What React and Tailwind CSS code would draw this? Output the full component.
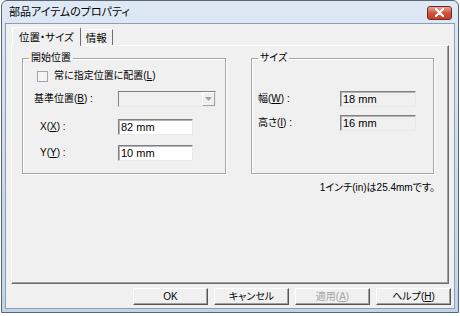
import React from "react";

function Mn({ children }) {
  return <span className="underline underline-offset-1">{children}</span>;
}

function Sunken({ value, readOnly, className = "" }) {
  return (
    <div
      className={`h-[16px] flex items-center border border-t-[#7f7f7f] border-l-[#7f7f7f] border-b-[#e9e9e9] border-r-[#e9e9e9] shadow-[inset_1px_1px_0_#b4b4b4] pl-[2px] text-[11px] leading-none text-black ${
        readOnly ? "bg-[#f0f0f0]" : "bg-white"
      } ${className}`}
    >
      {value}
    </div>
  );
}

function Btn({ children, disabled }) {
  return (
    <div
      className={`w-[75px] h-[17px] flex items-center justify-center border border-t-white border-l-white border-b-[#555] border-r-[#555] shadow-[inset_-1px_-1px_0_#a0a0a0] bg-[#f0f0f0] ${
        disabled ? "text-[#a3a3a3]" : "text-black"
      }`}
    >
      {children}
    </div>
  );
}

export default function App() {
  return (
    <div className="w-[460px] h-[316px] bg-white font-[family-name:'Liberation_Sans','Noto_Sans_CJK_JP',sans-serif] [font-feature-settings:'palt'] text-[10px] leading-[12px] text-black">
      <div className="w-[458px] h-[313px] ml-[1px] flex flex-col rounded-t-[6px] border border-[#5b6675] bg-gradient-to-b from-[#dfe9f5] via-[#cddcee] to-[#c2d4ea]">
        {/* title bar */}
        <div className="h-[22px] flex items-center justify-between pl-[7px] pr-[6px]">
          <span className="text-[11px] leading-[12px] text-black">部品アイテムのプロパティ</span>
          <div className="w-[25px] h-[14px] mt-[1px] rounded-[3px] border border-[#6b2a24] bg-gradient-to-b from-[#e8a493] via-[#d2513c] to-[#c2402b] flex items-center justify-center">
            <svg width="11" height="9" viewBox="0 0 11 9">
              <path d="M2 1 L9 8 M9 1 L2 8" stroke="#fff" strokeWidth="2.2" strokeLinecap="round" />
            </svg>
          </div>
        </div>

        {/* client */}
        <div className="flex-1 mx-[3px] mb-[3px] flex flex-col bg-[#f0f0f0] border border-[#8e9db1]">
          {/* tabs */}
          <div className="flex items-end pl-[6px] pt-[2px] h-[21px]">
            <div className="h-[19px] px-[6px] flex items-center bg-[#f0f0f0] border-t border-l border-white border-r border-r-[#6d6d6d] rounded-t-[2px] relative z-10 -mb-[1px] text-[10.5px]">
              位置・サイズ
            </div>
            <div className="h-[16px] px-[5px] flex items-center border-t border-white border-r border-r-[#6d6d6d] text-[10.5px]">
              情報
            </div>
          </div>

          {/* panel */}
          <div className="mx-[5px] h-[239px] border border-t-white border-l-white border-b-[#6d6d6d] border-r-[#6d6d6d] shadow-[inset_-1px_-1px_0_#a0a0a0] flex flex-col pl-[10px] pr-[13px]">
            <div className="flex gap-[25px] mt-[6px]">
              <fieldset className="w-[204px] h-[122px] border border-[#a7a7a7] shadow-[inset_1px_1px_0_#fff,1px_1px_0_#fff] flex flex-col">
                <legend className="ml-[6px] px-[2px] leading-[12px]">開始位置</legend>
                <div className="flex items-center h-[12px] mt-[6px] pl-[14px]">
                  <div className="w-[11px] h-[11px] border border-[#a6a6a6] bg-[#f4f4f4]" />
                  <span className="ml-[6px]">
                    常に指定位置に配置(<Mn>L</Mn>)
                  </span>
                </div>
                <div className="flex items-center h-[16px] mt-[9px] pl-[11px]">
                  <span className="w-[84px]">
                    基準位置(<Mn>B</Mn>) :
                  </span>
                  <div className="w-[98px] h-[16px] flex justify-end border border-t-[#7f7f7f] border-l-[#7f7f7f] border-b-[#e9e9e9] border-r-[#e9e9e9] bg-[#f0f0f0]">
                    <div className="w-[13px] h-[14px] border-l border-t border-white border-r border-b border-r-[#a0a0a0] border-b-[#a0a0a0] flex items-center justify-center">
                      <svg width="7" height="4" viewBox="0 0 7 4">
                        <path d="M0 0 L7 0 L3.5 4 Z" fill="#a0a0a0" />
                      </svg>
                    </div>
                  </div>
                </div>
                <div className="flex items-center h-[16px] mt-[12px] pl-[17px]">
                  <span className="w-[78px]">
                    X(<Mn>X</Mn>) :
                  </span>
                  <Sunken value="82 mm" className="w-[75px]" />
                </div>
                <div className="flex items-center h-[16px] mt-[10px] pl-[17px]">
                  <span className="w-[78px]">
                    Y(<Mn>Y</Mn>) :
                  </span>
                  <Sunken value="10 mm" className="w-[75px]" />
                </div>
              </fieldset>

              <fieldset className="w-[183px] h-[122px] border border-[#a7a7a7] shadow-[inset_1px_1px_0_#fff,1px_1px_0_#fff] flex flex-col">
                <legend className="ml-[6px] px-[2px] leading-[12px]">サイズ</legend>
                <div className="flex items-center h-[16px] mt-[27px] pl-[6px]">
                  <span className="w-[82px]">
                    幅(<Mn>W</Mn>) :
                  </span>
                  <Sunken value="18 mm" readOnly className="w-[76px]" />
                </div>
                <div className="flex items-center h-[16px] mt-[8px] pl-[6px]">
                  <span className="w-[82px]">
                    高さ(<Mn>I</Mn>) :
                  </span>
                  <Sunken value="16 mm" readOnly className="w-[76px]" />
                </div>
              </fieldset>
            </div>
            <div className="mt-[8px] text-right">1インチ(in)は25.4mmです。</div>
          </div>

          {/* buttons */}
          <div className="flex justify-end gap-[6px] mt-[4px] pr-[3px]">
            <Btn>OK</Btn>
            <Btn>キャンセル</Btn>
            <Btn disabled>
              適用(<Mn>A</Mn>)
            </Btn>
            <Btn>
              ヘルプ(<Mn>H</Mn>)
            </Btn>
          </div>
        </div>
      </div>
    </div>
  );
}
